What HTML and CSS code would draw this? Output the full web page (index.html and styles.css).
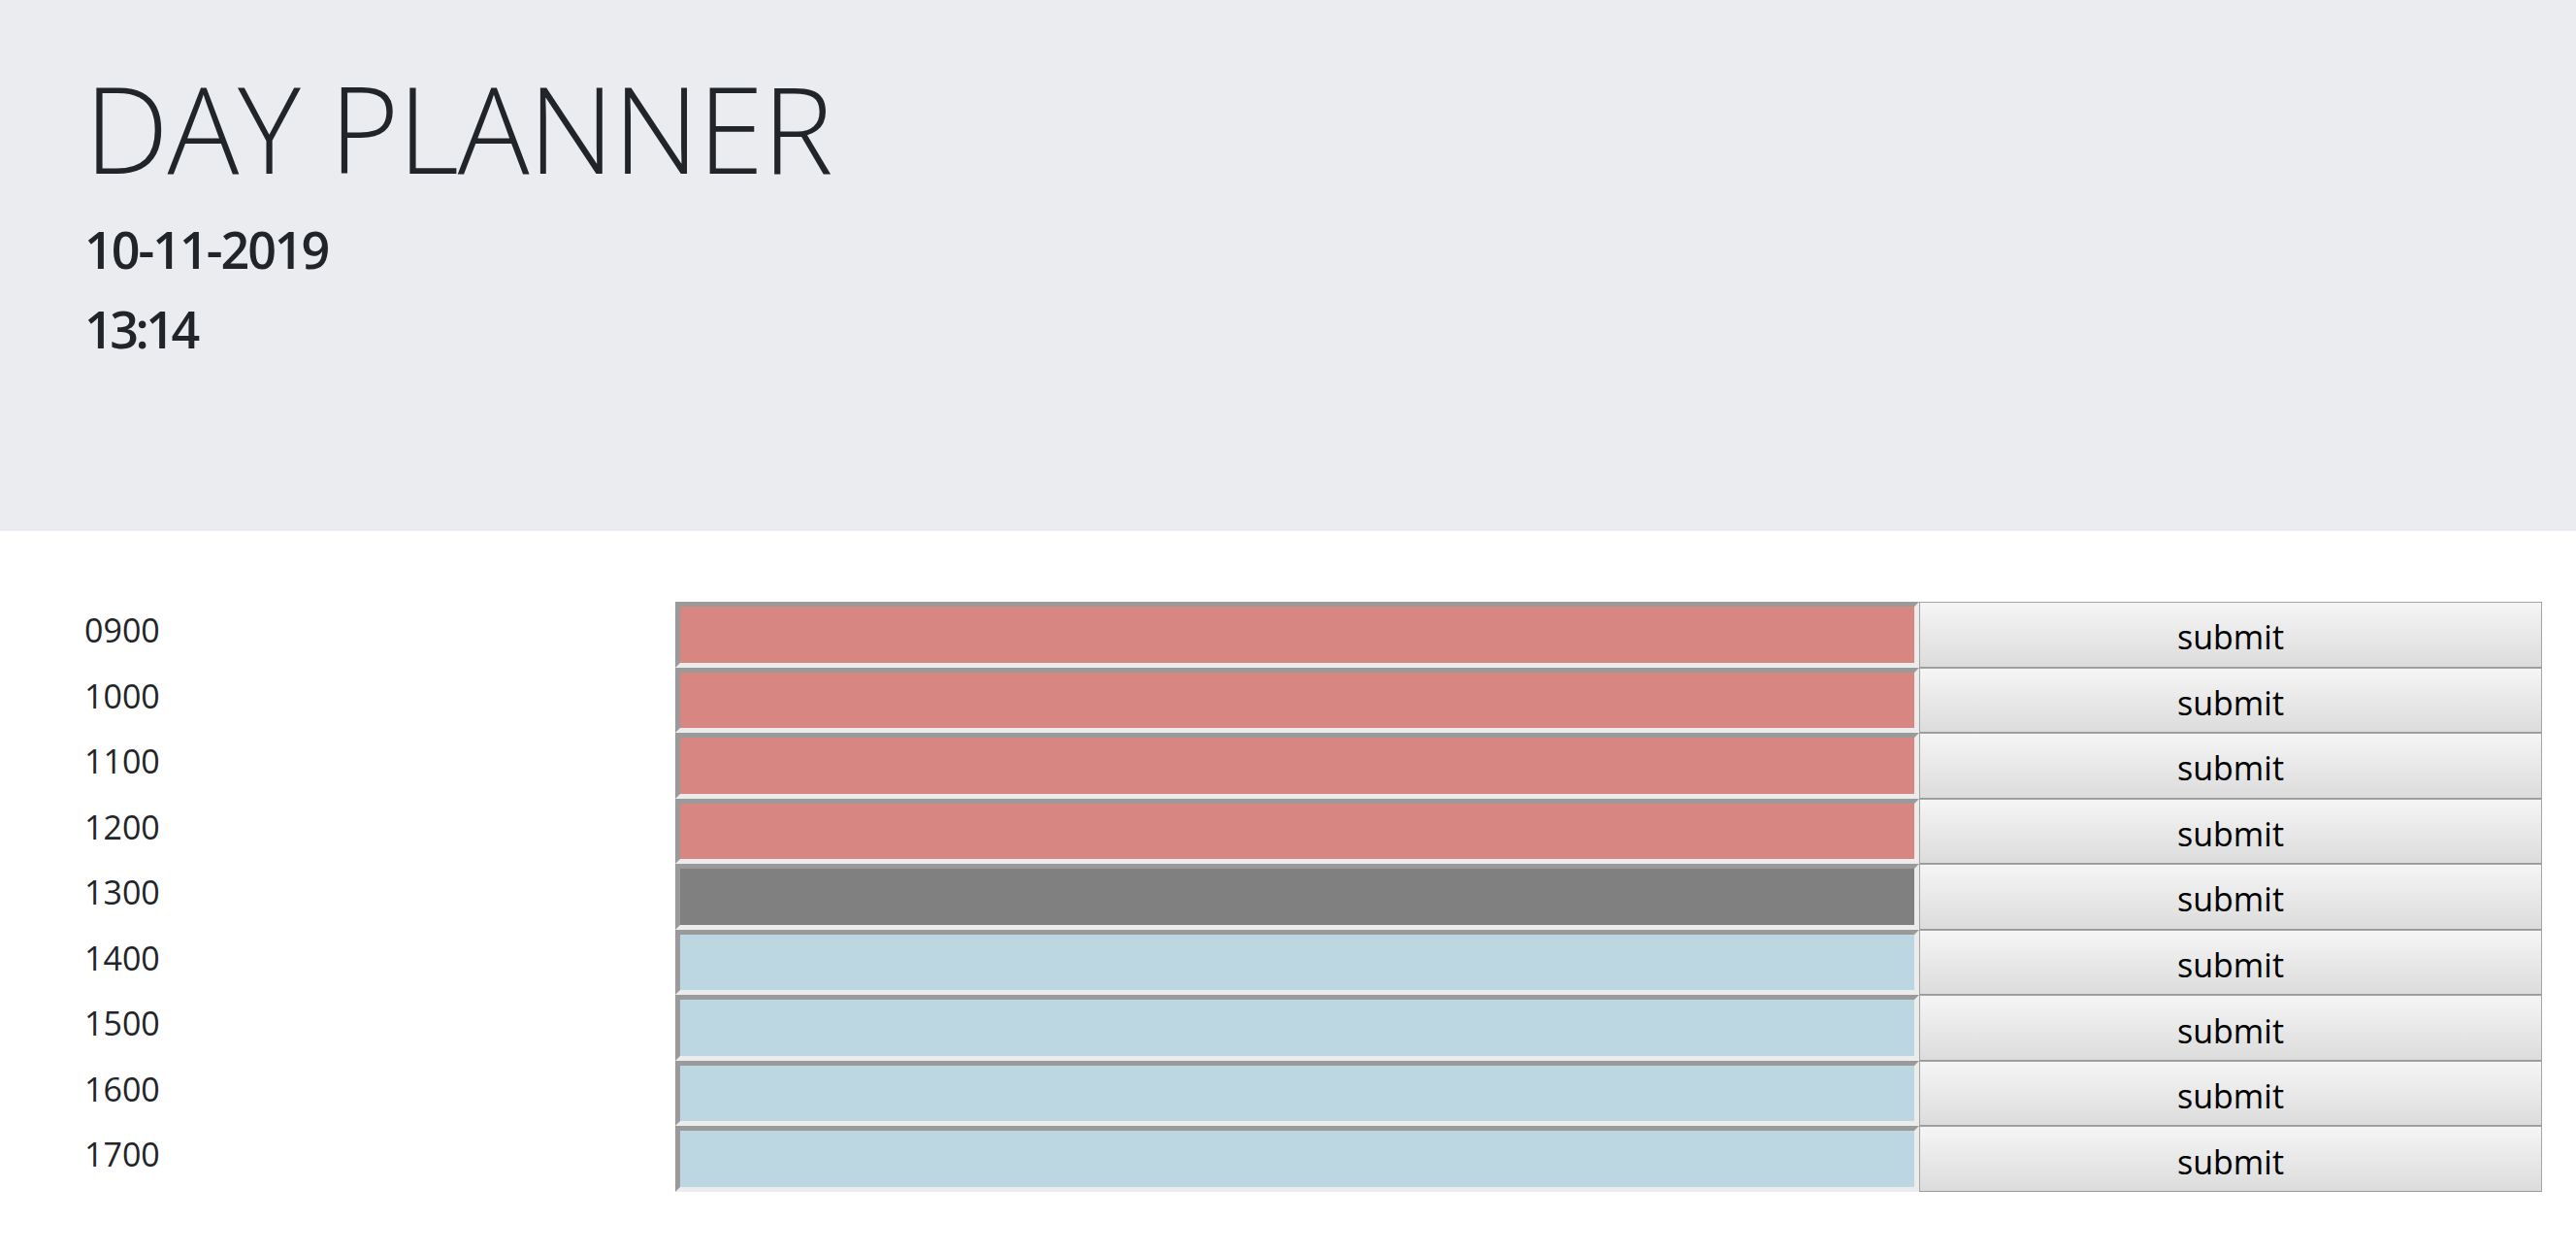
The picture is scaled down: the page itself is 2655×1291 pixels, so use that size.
FILE: index.html
```html
<!DOCTYPE html>
<html lang="en">
<head>
<meta charset="utf-8">
<title>Day Planner</title>
<link rel="stylesheet" href="styles.css">
</head>
<body>
<header class="jumbotron">
  <h1 class="title">DAY PLANNER</h1>
  <p class="date">10-11-2019</p>
  <p class="time">13:14</p>
</header>
<main class="planner">
  <div class="row"><div class="hour">0900</div><textarea class="slot past"></textarea><button class="save">submit</button></div>
  <div class="row"><div class="hour">1000</div><textarea class="slot past"></textarea><button class="save">submit</button></div>
  <div class="row"><div class="hour">1100</div><textarea class="slot past"></textarea><button class="save">submit</button></div>
  <div class="row"><div class="hour">1200</div><textarea class="slot past"></textarea><button class="save">submit</button></div>
  <div class="row"><div class="hour">1300</div><textarea class="slot present"></textarea><button class="save">submit</button></div>
  <div class="row"><div class="hour">1400</div><textarea class="slot future"></textarea><button class="save">submit</button></div>
  <div class="row"><div class="hour">1500</div><textarea class="slot future"></textarea><button class="save">submit</button></div>
  <div class="row"><div class="hour">1600</div><textarea class="slot future"></textarea><button class="save">submit</button></div>
  <div class="row"><div class="hour">1700</div><textarea class="slot future"></textarea><button class="save">submit</button></div>
</main>
</body>
</html>
```
FILE: styles.css
```css
* { box-sizing: border-box; }

html, body {
  margin: 0;
  padding: 0;
  background: #ffffff;
  color: #212529;
  font-family: "Open Sans", "Noto Sans", "Liberation Sans", sans-serif;
}

.jumbotron {
  background: #eaecf0;
  height: 547px;
  padding: 58px 0 0 87px;
}

.title {
  margin: 0;
  font-size: 123px;
  line-height: 148px;
  font-weight: 300;
  letter-spacing: -1.3px;
  color: #212529;
}

.date {
  margin: 12px 0 0;
  font-size: 52px;
  line-height: 78px;
  font-weight: 600;
  letter-spacing: -2px;
}

.time {
  margin: 4px 0 0;
  font-size: 52px;
  line-height: 78px;
  font-weight: 600;
  letter-spacing: -3.5px;
}

.planner {
  padding: 73px 35px 0 87px;
  display: flex;
  flex-direction: column;
}

.row {
  display: flex;
  height: 67.55px;
}

.hour {
  flex: 0 0 609px;
  padding-top: 4px;
  font-size: 34px;
  line-height: 51px;
  color: #212529;
}

.slot {
  flex: 0 0 1282px;
  height: 100%;
  margin: 0;
  resize: none;
  border-style: solid;
  border-width: 5px;
  border-color: #9a9a9a #ececec #ececec #9a9a9a;
  font-family: inherit;
}

.past { background: #d88681; }
.present { background: #808080; }
.future { background: #bcd7e2; }

.save {
  flex: 0 0 642px;
  height: 100%;
  margin: 0;
  padding: 5px 0 0;
  border: 1px solid #a4a4a4;
  border-bottom-color: #999999;
  background: linear-gradient(#f5f5f5, #dcdcdc);
  font-family: "Open Sans", "Noto Sans", sans-serif;
  font-size: 34px;
  color: #000000;
}
```
